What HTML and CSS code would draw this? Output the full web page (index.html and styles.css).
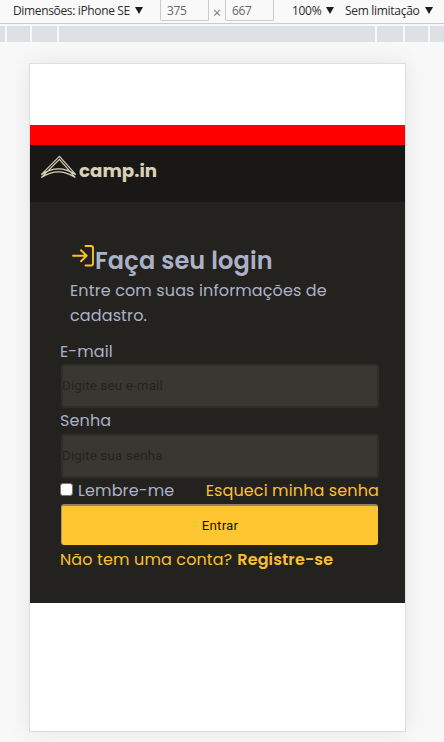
FILE: index.html
```html
<!DOCTYPE html>
<html lang="pt-BR">
<head>
<meta charset="utf-8">
<title>camp.in</title>
<link rel="stylesheet" href="styles.css">
</head>
<body>
<div class="toolbar">
  <span class="device">Dimensões: iPhone SE</span><i class="arrow"></i>
  <span class="size">375</span><span class="times">×</span><span class="size">667</span>
  <span class="zoom">100%</span><i class="arrow"></i>
  <span class="throttle">Sem limitação</span><i class="arrow"></i>
</div>
<div class="ruler"><i></i><i></i><i></i><i class="wide"></i><i></i><i></i><i></i></div>
<div class="screen">
  <div class="stripe"></div>
  <header class="header">
    <svg class="logo" width="37" height="25" viewBox="0 0 38 26" fill="none" stroke="#d8d1b7" stroke-width="1.2">
      <path d="M1 20.500 20 1.500 37 20.500M1 23.500 20 4.500 36.500 23.500M1 20.500Q19 8.500 37 20.500M1 23.500Q19 11.500 36.500 23.500"/>
    </svg>
    <span class="brand">camp.in</span>
  </header>
  <main class="main">
    <section class="intro">
      <div class="heading">
        <svg class="enter" width="24" height="24" viewBox="0 0 24 24" fill="none" stroke="#f9c031" stroke-width="1.900" stroke-linecap="round" stroke-linejoin="round">
          <path d="M14.500 2H20Q22 2 22 4V19.500Q22 21.500 20 21.500H14.500M2 11.700H15.500M10 6.200 15.700 11.700 10 17.200"/>
        </svg>
        <h1>Faça seu login</h1>
      </div>
      <p>Entre com suas informações de<br>cadastro.</p>
    </section>
    <form class="form">
      <label class="label email">E-mail</label>
      <input class="field" type="text" placeholder="Digite seu e-mail">
      <label class="label pass">Senha</label>
      <input class="field" type="password" placeholder="Digite sua senha">
      <div class="options">
        <label class="remember"><i class="box"></i><span>Lembre-me</span></label>
        <a class="forgot">Esqueci minha senha</a>
      </div>
      <button class="submit" type="button">Entrar</button>
      <p class="signup"><span>Não tem uma conta?</span><b>Registre-se</b></p>
    </form>
  </main>
</div>
</body>
</html>
```
FILE: styles.css
```css
* { box-sizing: border-box; }
body { margin: 0; height: 742px; overflow: hidden; background: #f8f8f8; font-family: "Poppins", "Inter", sans-serif; }
p, h1 { margin: 0; }
.toolbar { display: flex; height: 24px; padding-left: 13px; border-bottom: 1px solid #c9cbce; background: #f9f9f9; color: #2b2c2e; font: 12px/22px "Open Sans", sans-serif; white-space: nowrap; }
.device { width: 117px; letter-spacing: -0.35px; }
.arrow { width: 8px; height: 7px; margin: 7px 0 0 5px; background: #1c1d1f; clip-path: polygon(0 0, 100% 0, 50% 100%); }
.size { width: 49px; height: 21px; padding-left: 6px; border: 1px solid #c9cbce; border-top: 0; border-radius: 0 0 2px 2px; color: #666; letter-spacing: -0.3px; }
.arrow + .size { margin-left: 17px; }
.times { width: 16px; text-align: center; font-size: 14px; line-height: 25px; color: #777; }
.zoom { width: 29px; margin-left: 18px; letter-spacing: -0.3px; }
.throttle { width: 75px; margin-left: 11px; letter-spacing: -0.3px; }
.ruler { display: flex; gap: 2px; height: 16px; margin-top: 2px; }
.ruler i { background: #dde1e6; width: 5px; }
.ruler i:nth-child(2) { width: 23px; }
.ruler i:nth-child(3) { width: 25px; }
.ruler i.wide { width: 316px; }
.ruler i:nth-child(5) { width: 26px; }
.ruler i:nth-child(6) { width: 23px; }
.ruler i:nth-child(7) { width: 14px; }
.screen { width: 377px; height: 669px; margin: 21px 0 0 29px; padding-top: 61px; border: 1px solid #dedede; background: #fff; box-shadow: 0 0 22px rgba(0,0,0,.08); }
.stripe { height: 20px; background: #f00; }
.header { display: flex; height: 57px; padding: 10px 0 0 10px; background: #1a1816; }
.brand { margin-left: 2px; color: #d8d1b7; font-size: 18.300px; font-weight: 700; line-height: 32px; }
.main { height: 401px; padding: 42px 26px 0 30px; background: #24221e; color: #abb2c8; font-size: 16px; line-height: 25px; letter-spacing: .12px; }
.intro { height: 95px; padding-left: 10px; white-space: nowrap; }
.heading { display: flex; height: 34px; }
.enter { margin-left: 1px; }
h1 { font-size: 24px; font-weight: 600; line-height: 34px; letter-spacing: .15px; }
.form { display: flex; flex-direction: column; white-space: nowrap; }
.label { height: 25px; line-height: 25px; }
.field { width: 318px; height: 44px; margin: 0 0 0 1px; padding: 0 0 2px; border: 2px solid #302e2a; border-radius: 3px; background: #393731; font: 13.300px Roboto, sans-serif; letter-spacing: .17px; text-indent: -1px; }
.field::placeholder { color: #24231f; opacity: 1; }
.label.pass { height: 26px; }
.options { display: flex; justify-content: space-between; height: 26px; line-height: 26px; }
.remember { display: flex; }
.box { width: 13px; height: 13px; margin: 5px 5px 0 0; border: 1px solid #767676; border-radius: 3px; background: #fff; }
.forgot, .signup { color: #fbc032; }
.submit { width: 317px; height: 41px; margin: 0 0 1px 1px; padding: 0; border: 0; border-top: 2px solid #8d836e; border-left: 1px solid #a69570; border-radius: 3px; background: #ffc631; color: #151515; font: 13.300px Roboto, sans-serif; letter-spacing: .2px; }
.signup { display: flex; gap: 5px; line-height: 27px; }
.signup b { font-weight: 600; }
```
